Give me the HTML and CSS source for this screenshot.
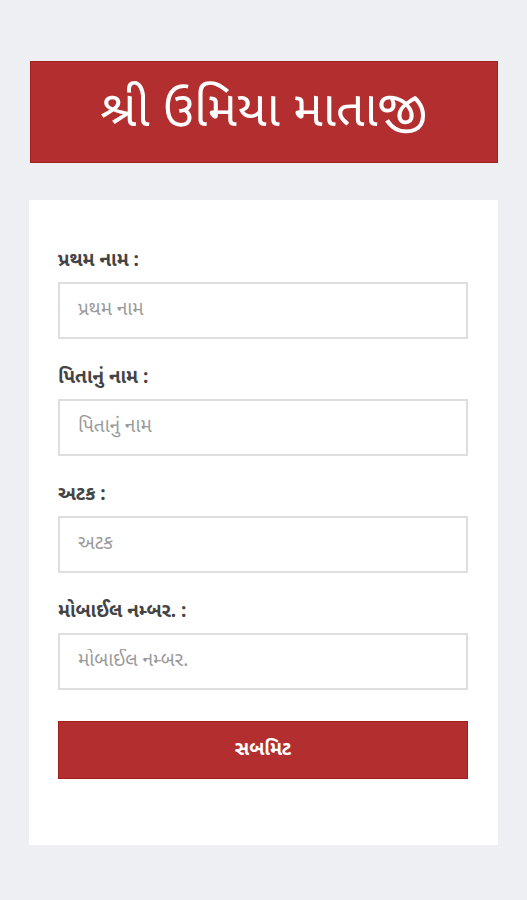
FILE: index.html
```html
<!DOCTYPE html>
<html lang="gu">
<head>
<meta charset="utf-8">
<title>શ્રી ઉમિયા માતાજી</title>
<link rel="stylesheet" href="styles.css">
</head>
<body>
<div class="page">
  <header class="banner">
    <h1 class="banner-title">શ્રી ઉમિયા માતાજી</h1>
  </header>
  <form class="card">
    <div class="field">
      <label class="field-label">પ્રથમ નામ :</label>
      <input class="field-input" type="text" placeholder="પ્રથમ નામ">
    </div>
    <div class="field">
      <label class="field-label">પિતાનું નામ :</label>
      <input class="field-input" type="text" placeholder="પિતાનું નામ">
    </div>
    <div class="field">
      <label class="field-label">અટક :</label>
      <input class="field-input" type="text" placeholder="અટક">
    </div>
    <div class="field">
      <label class="field-label">મોબાઈલ નમ્બર. :</label>
      <input class="field-input" type="text" placeholder="મોબાઈલ નમ્બર.">
    </div>
    <button class="submit" type="button">સબમિટ</button>
  </form>
</div>
</body>
</html>
```

FILE: styles.css
```css
* { box-sizing: border-box; }
html, body {
  margin: 0;
  padding: 0;
  background: #eeeff3;
}
body {
  font-family: "Noto Sans Gujarati", "Noto Sans", "DejaVu Sans", sans-serif;
  color: #444;
}
.page {
  padding: 61px 29px 0 30px;
  display: flex;
  flex-direction: column;
}
.banner {
  height: 102px;
  background: #b32f2f;
  border: 1px solid #a31f1f;
  display: flex;
  align-items: center;
  justify-content: center;
}
.banner-title {
  margin: 0;
  padding-top: 4px;
  color: #fff;
  font-weight: 400;
  font-size: 50px;
  line-height: 1;
}
.card {
  margin-top: 37px;
  background: #fff;
  padding: 49px 30px 66px 29px;
  margin-left: -1px;
  display: flex;
  flex-direction: column;
}
.field {
  display: flex;
  flex-direction: column;
  margin-bottom: 27px;
}
.field:nth-of-type(4) { margin-bottom: 31px; }
.field-label {
  font-size: 19px;
  font-weight: 700;
  line-height: 22px;
  padding-top: 2px;
  color: #444;
  margin-bottom: 9px;
}
.field-input {
  height: 57px;
  border: 2px solid #dedede;
  padding: 0 18px;
  font-family: inherit;
  font-size: 19px;
  color: #444;
  background: #fff;
  outline: none;
}
.field-input::placeholder { color: #9a9a9a; }
.submit {
  height: 58px;
  background: #b32f2f;
  border: 1px solid #a31f1f;
  color: #fff;
  font-family: inherit;
  font-size: 19px;
  font-weight: 700;
}
```
